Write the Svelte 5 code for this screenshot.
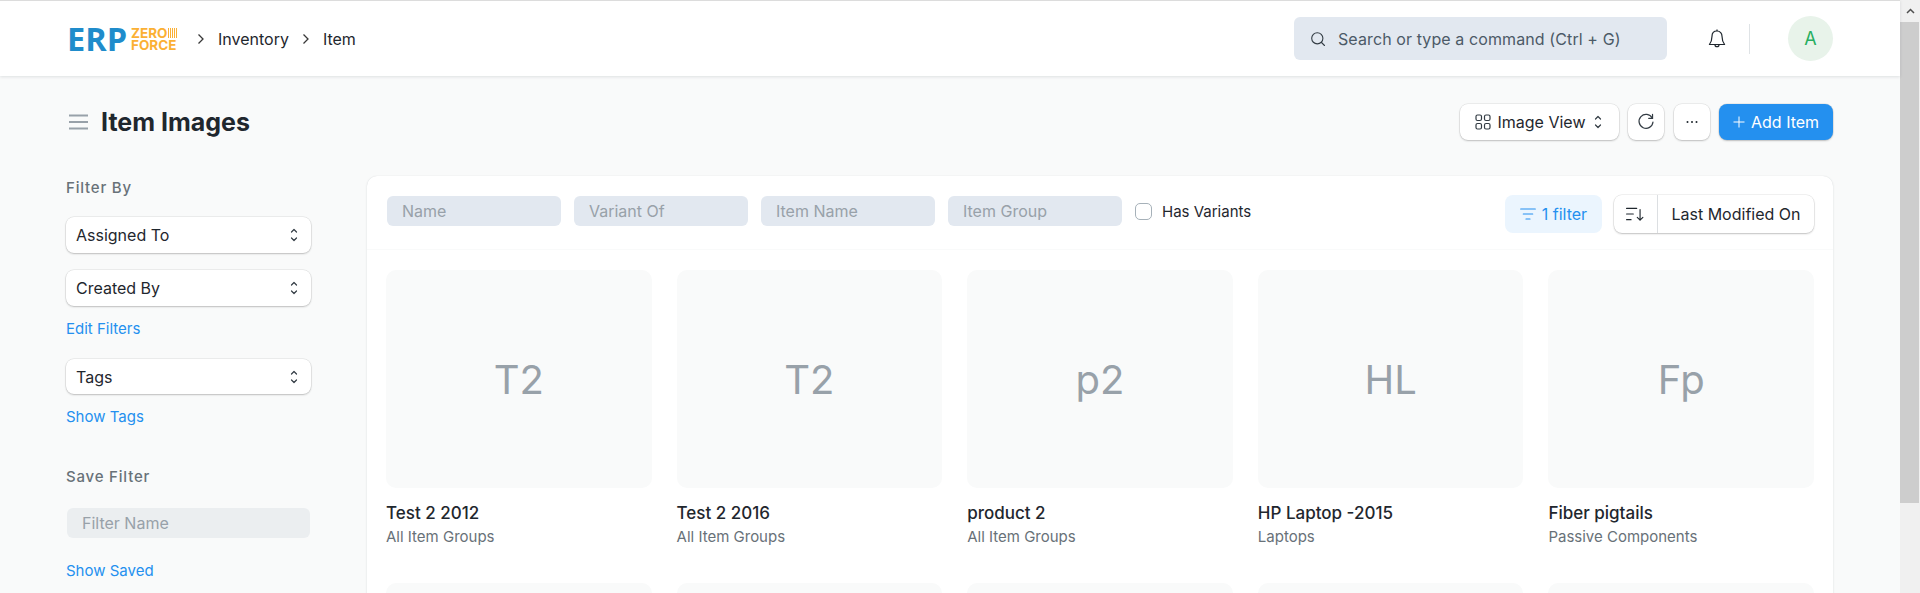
<script>
  const items = [
    { abbr: 'T2', title: 'Test 2 2012', group: 'All Item Groups' },
    { abbr: 'T2', title: 'Test 2 2016', group: 'All Item Groups' },
    { abbr: 'p2', title: 'product 2', group: 'All Item Groups' },
    { abbr: 'HL', title: 'HP Laptop -2015', group: 'Laptops' },
    { abbr: 'Fp', title: 'Fiber pigtails', group: 'Passive Components' }
  ];
  const fields = ['Name', 'Variant Of', 'Item Name', 'Item Group'];
</script>

{#snippet updown()}
  <svg class="updown" width="12" height="14" viewBox="0 0 12 14" fill="none" stroke="currentColor" stroke-width="1.2" stroke-linecap="round" stroke-linejoin="round">
    <path d="M3.5 4 6 1.5 8.5 4M3.5 10 6 12.5 8.5 10" />
  </svg>
{/snippet}

<div class="window">
  <div class="page">
    <header class="navbar">
      <div class="logo">
        <span class="erp">ERP</span>
        <span class="zf"><span class="zero">ZERO<i class="bars"></i></span><span>FORCE</span></span>
      </div>
      <nav class="crumbs">
        <svg width="8" height="12" viewBox="0 0 8 12" fill="none" stroke="#383838" stroke-width="1.3"><path d="M1.5 1.5 6 6l-4.5 4.5" /></svg>
        <span>Inventory</span>
        <svg width="8" height="12" viewBox="0 0 8 12" fill="none" stroke="#383838" stroke-width="1.3"><path d="M1.5 1.5 6 6l-4.5 4.5" /></svg>
        <span>Item</span>
      </nav>
      <div class="nav-right">
        <div class="search">
          <svg width="16" height="16" viewBox="0 0 16 16" fill="none" stroke="#333c44" stroke-width="1.1"><circle cx="7.3" cy="7.3" r="5.6" /><path d="m11.5 11.5 3 3" stroke-linecap="round" /></svg>
          <span class="search-text">Search or type a command (Ctrl + G)</span>
        </div>
        <svg class="bell" width="20" height="22" viewBox="0 0 20 22" fill="none" stroke="#1f272e" stroke-width="1.2" stroke-linejoin="round">
          <path d="M10 3c-3.2 0-5 2.400-5 5.300 0 4-.9 6-2.600 8.200h15.200C15.900 14.300 15 12.300 15 8.300 15 5.400 13.200 3 10 3Z" />
          <path d="M10 1.400V3M8 16.700a2 2 0 0 0 4 0" />
        </svg>
        <div class="vline"></div>
        <div class="avatar">A</div>
      </div>
    </header>

    <div class="body">
      <div class="head">
        <svg width="19" height="16" viewBox="0 0 19 16" fill="none" stroke="#98a1a9" stroke-width="1.800"><path d="M0 1.500h19M0 8h19M0 14.500h19" /></svg>
        <h1>Item Images</h1>
        <div class="actions">
          <button class="btn view">
            <svg width="16" height="16" viewBox="0 0 16 16" fill="none" stroke="#333c44" stroke-width="1.200"><rect x="1" y="1" width="5.500" height="5.500" rx="1.500" /><rect x="9.500" y="1" width="5.500" height="5.500" rx="1.500" /><rect x="1" y="9.500" width="5.500" height="5.500" rx="1.500" /><rect x="9.500" y="9.500" width="5.500" height="5.500" rx="1.500" /></svg>
            Image View
            {@render updown()}
          </button>
          <button class="btn icon" aria-label="Refresh">
            <svg width="18" height="18" viewBox="0 0 16 16" fill="none" stroke="#333c44" stroke-width="1.100" stroke-linecap="round"><path d="M13.500 4.500A6.200 6.200 0 1 0 14.200 8" /><path d="M13.800 1.300v3.400h-3.400" /></svg>
          </button>
          <button class="btn icon" aria-label="More">
            <svg width="14" height="4" viewBox="0 0 14 4" fill="#1f272e"><circle cx="2.500" cy="2" r="1" /><circle cx="7" cy="2" r="1" /><circle cx="11.500" cy="2" r="1" /></svg>
          </button>
          <button class="btn primary">
            <svg width="12" height="12" viewBox="0 0 12 12" stroke="#fff" stroke-width="1"><path d="M6 .500v11M.500 6h11" /></svg>
            Add Item
          </button>
        </div>
      </div>

      <div class="columns">
        <aside class="side">
          <div class="label first">Filter By</div>
          <div class="select one">Assigned To {@render updown()}</div>
          <div class="select two">Created By {@render updown()}</div>
          <a class="link" href="#edit">Edit Filters</a>
          <div class="select tags">Tags {@render updown()}</div>
          <a class="link" href="#tags">Show Tags</a>
          <div class="label save">Save Filter</div>
          <div class="filter-name">Filter Name</div>
          <a class="link saved" href="#saved">Show Saved</a>
        </aside>

        <main class="card">
          <div class="toolbar">
            {#each fields as f}
              <div class="field">{f}</div>
            {/each}
            <label class="check"><span class="box"></span>Has Variants</label>
            <div class="tools">
              <div class="filter-btn">
                <svg width="16" height="12" viewBox="0 0 16 12" fill="none" stroke="#2490ef" stroke-width="1.200" stroke-linecap="round"><path d="M.700 1h14.600M3.300 6h9.400M6 11h4" /></svg>
                1 filter
              </div>
              <div class="sort">
                <div class="sort-icon">
                  <svg width="18" height="16" viewBox="0 0 16 14" fill="none" stroke="#1f272e" stroke-width="1" stroke-linecap="round" stroke-linejoin="round"><path d="M.500 2h9M.500 7h6M.500 12h4M12.500 3v9.500M10 10l2.500 2.500L15 10" /></svg>
                </div>
                <div class="sort-label">Last Modified On</div>
              </div>
            </div>
          </div>
          <div class="grid">
            {#each items as item}
              <div class="item">
                <div class="thumb">{item.abbr}</div>
                <div class="title">{item.title}</div>
                <div class="group">{item.group}</div>
              </div>
            {/each}
            {#each items as item}
              <div class="thumb"></div>
            {/each}
          </div>
        </main>
      </div>
    </div>
  </div>

  <div class="scrollbar">
    <div class="arrow">
      <svg width="9" height="6" viewBox="0 0 9 6" fill="none" stroke="#505050" stroke-width="1.500"><path d="M1 5l3.500-3.500L8 5" /></svg>
    </div>
    <div class="thumb-bar"></div>
  </div>
</div>

<style>
  :global(body) {
    margin: 0;
    overflow: hidden;
    background: #f9fafa;
  }

  .window {
    display: flex;
    height: 593px;
    overflow: hidden;
    font-family: Inter, 'Liberation Sans', sans-serif;
    font-size: 16px;
    color: #1f272e;
  }

  .page {
    flex: 1;
    min-width: 0;
  }

  /* navbar */
  .navbar {
    display: flex;
    align-items: center;
    height: 75px;
    padding: 0 67px 0 69px;
    background: #fff;
    border-top: 1px solid #dcdcdc;
    box-shadow: 0 1px 3px rgba(25, 39, 52, 0.12);
    position: relative;
  }

  .logo {
    display: flex;
    align-items: center;
    width: 108px;
    margin-right: 20px;
  }

  .erp {
    flex: none;
    width: 64px;
    margin-left: -2px;
    font-family: 'Open Sans', sans-serif;
    font-size: 32.500px;
    font-weight: 700;
    line-height: 24px;
    color: #1f8ccb;
  }

  .zf {
    flex: none;
    display: flex;
    flex-direction: column;
    font-size: 13.500px;
    font-weight: 700;
    line-height: 12px;
    color: #fbb034;
  }

  .zero {
    display: flex;
    align-items: center;
    gap: 1px;
  }

  .bars {
    width: 9px;
    height: 10px;
    background: repeating-linear-gradient(90deg, #fbb034 0 1px, #fff 1px 2px);
  }

  .crumbs {
    display: flex;
    align-items: center;
    gap: 13px;
  }

  .nav-right {
    display: flex;
    align-items: center;
    margin-left: auto;
  }

  .search {
    display: flex;
    align-items: center;
    gap: 12px;
    box-sizing: border-box;
    width: 373px;
    height: 43px;
    padding: 0 16px;
    border-radius: 6px;
    background: #e2e8f0;
    color: #4c5a67;
  }

  .search-text {
    letter-spacing: 0.1px;
  }

  .bell {
    margin-left: 40px;
  }

  .vline {
    width: 1px;
    height: 30px;
    margin: 0 38px 0 22px;
    background: #dfe3e6;
  }

  .avatar {
    display: flex;
    align-items: center;
    justify-content: center;
    width: 45px;
    height: 45px;
    border-radius: 50%;
    background: #e8f3ea;
    color: #27ae60;
    font-size: 18px;
  }

  /* page head */
  .body {
    padding: 0 67px 0 66px;
  }

  .head {
    display: flex;
    align-items: center;
    height: 92px;
    padding-left: 3px;
  }

  h1 {
    margin: 0 0 0 13px;
    font-size: 25px;
    font-weight: 700;
    color: #1f272e;
  }

  .actions {
    display: flex;
    align-items: center;
    gap: 9.500px;
    margin-left: auto;
  }

  .btn {
    display: flex;
    align-items: center;
    gap: 7px;
    box-sizing: border-box;
    height: 36px;
    border: none;
    border-radius: 8px;
    background: #fff;
    box-shadow: 0 0 0 0.500px rgba(0, 0, 0, 0.1), 0 1px 2px rgba(0, 0, 0, 0.2);
    color: #1f272e;
    font: inherit;
  }

  .btn.view {
    width: 159px;
    padding: 0 0 0 15px;
  }

  .btn.icon {
    justify-content: center;
    width: 36px;
    padding: 0;
  }

  .btn.primary {
    width: 114px;
    padding: 0 0 0 14px;
    gap: 6px;
    background: #2490ef;
    color: #fff;
  }

  .updown {
    color: #333c44;
    flex: none;
  }

  /* sidebar + main */
  .columns {
    display: flex;
    align-items: flex-start;
    margin-top: 8px;
  }

  .side {
    display: flex;
    flex-direction: column;
    align-items: flex-start;
    width: 246px;
    margin-right: 55px;
    padding-top: 3px;
  }

  .label {
    color: #687178;
    font-size: 15px;
    font-weight: 500;
    line-height: 18px;
    letter-spacing: 0.8px;
  }

  .select {
    display: flex;
    align-items: center;
    justify-content: space-between;
    box-sizing: border-box;
    width: 245px;
    height: 36px;
    padding: 0 11px 0 10px;
    border-radius: 8px;
    background: #fff;
    box-shadow: 0 0 0 0.500px rgba(0, 0, 0, 0.1), 0 1px 2px rgba(0, 0, 0, 0.2);
  }

  .select.one {
    margin: 20px 0 17px;
  }

  .select.two {
    margin-bottom: 14px;
  }

  .select.tags {
    height: 35px;
    margin: 21px 0 14px;
  }

  .link {
    color: #2490ef;
    font-size: 15px;
    text-decoration: none;
    line-height: 18px;
  }

  .save {
    margin-top: 42px;
  }

  .filter-name {
    box-sizing: border-box;
    width: 243px;
    height: 30px;
    margin: 22px 0 0 1px;
    padding: 0 15px;
    border-radius: 6px;
    background: #ebeef0;
    color: #98a1a9;
    line-height: 30px;
  }

  .saved {
    margin-top: 24px;
  }

  .card {
    flex: 1;
    min-width: 0;
    height: 500px;
    border-radius: 10px;
    background: #fff;
    box-shadow: 0 0 1px rgba(25, 39, 52, 0.15), 0 1px 3px rgba(25, 39, 52, 0.08);
  }

  .toolbar {
    display: flex;
    align-items: center;
    gap: 13.500px;
    box-sizing: border-box;
    height: 74px;
    padding: 0 19px 4px 20px;
    border-bottom: 1px solid #f9fafa;
  }

  .field {
    box-sizing: border-box;
    width: 173.500px;
    height: 30px;
    padding: 0 15px;
    border-radius: 6px;
    background: #e2e8f0;
    color: #98a1a9;
    line-height: 30px;
  }

  .check {
    display: flex;
    align-items: center;
    gap: 10px;
    margin-top: 1px;
    font-size: 15px;
  }

  .box {
    box-sizing: border-box;
    width: 17px;
    height: 17px;
    border: 1px solid #a6b1b9;
    border-radius: 5px;
    background: #fff;
  }

  .tools {
    display: flex;
    align-items: center;
    gap: 12px;
    margin-left: auto;
    margin-top: 6px;
  }

  .filter-btn {
    display: flex;
    align-items: center;
    justify-content: center;
    gap: 6px;
    width: 97px;
    height: 38px;
    border-radius: 8px;
    background: #ebf5fe;
    color: #2490ef;
  }

  .sort {
    display: flex;
    align-items: center;
    height: 38px;
    border-radius: 8px;
    background: #fff;
    box-shadow: 0 0 0 0.500px rgba(0, 0, 0, 0.1), 0 1px 2px rgba(0, 0, 0, 0.2);
  }

  .sort-icon {
    display: flex;
    align-items: center;
    justify-content: center;
    width: 43px;
    height: 100%;
    border-right: 1px solid #dcdfe2;
  }

  .sort-label {
    padding: 0 13.500px;
  }

  .grid {
    display: grid;
    grid-template-columns: repeat(5, 1fr);
    column-gap: 25px;
    row-gap: 0;
    padding: 20px 19px 0 19px;
  }

  .item {
    height: 313px;
  }

  .thumb {
    display: flex;
    align-items: center;
    justify-content: center;
    height: 218px;
    border-radius: 10px;
    background: #f9fafa;
    color: #98a1a9;
    font-size: 40px;
  }

  .title {
    margin-top: 13px;
    font-size: 17px;
    font-weight: 500;
    line-height: 24px;
  }

  .group {
    margin-top: 2px;
    color: #687178;
    font-size: 15px;
    line-height: 20px;
  }

  /* fake browser scrollbar */
  .scrollbar {
    flex: none;
    width: 20px;
    background: #f0f0f0;
  }

  .arrow {
    display: flex;
    align-items: center;
    justify-content: center;
    height: 22px;
  }

  .thumb-bar {
    width: 19px;
    height: 481px;
    background: #cdcdcd;
  }
</style>
